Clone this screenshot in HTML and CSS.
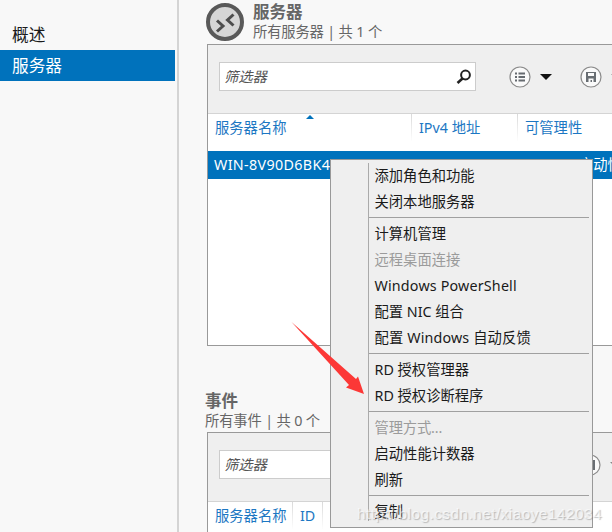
FILE: index.html
```html
<!DOCTYPE html>
<html lang="zh-CN">
<head>
<meta charset="utf-8">
<title>服务器</title>
<link rel="stylesheet" href="styles.css">
</head>
<body>
<div class="app">
  <nav class="sidebar">
    <a class="nav-item">概述</a>
    <a class="nav-item active">服务器</a>
  </nav>
  <main class="main">
    <section class="section">
      <header class="head">
        <svg class="logo" width="40" height="40" viewBox="0 0 40 40"><circle cx="20" cy="20" r="17" fill="#d6d6d6" stroke="#595959" stroke-width="4"/><path d="M12 18.500l6 5.500-6 5.500M28.500 12.500l-6 5.500 6 5.500" fill="none" stroke="#4d4d4d" stroke-width="3"/></svg>
        <div>
          <h2>服务器</h2>
          <p>所有服务器 | 共 1 个</p>
        </div>
      </header>
      <div class="panel panel-servers">
        <div class="toolbar">
          <div class="filter"><span>筛选器</span>
            <svg width="16" height="16" viewBox="0 0 16 16" fill="none" stroke="#222"><circle cx="9.500" cy="6" r="4.400" stroke-width="2"/><path d="M6.500 9.500L1.500 14" stroke-width="2.600"/></svg>
          </div>
          <svg class="list-btn" width="22" height="22" viewBox="0 0 22 22"><circle cx="11" cy="11" r="10" fill="#fafafa" stroke="#8b8b8b" stroke-width="1.200"/><path d="M6 7.500h2M6 11h2M6 14.500h2M9.500 7.500h6.500M9.500 11h6.500M9.500 14.500h6.500" stroke="#666b70" stroke-width="2"/></svg>
          <i class="caret"></i>
          <svg class="save-btn" width="22" height="22" viewBox="0 0 22 22"><circle cx="11" cy="11" r="10" fill="#fafafa" stroke="#8b8b8b" stroke-width="1.200"/><path d="M6 6h10v10H6z" fill="#696e73"/><path d="M8 7h6v3H8zM8.500 12.500h5v3.500h-1.500v-2h-1.500v2h-2z" fill="#fafafa"/></svg>
          <i class="caret next"></i>
        </div>
        <div class="columns">
          <span class="c-name">服务器名称<i class="sort"></i></span><span class="c-ip">IPv4 地址</span><span class="c-manage">可管理性</span>
        </div>
        <div class="row"><span class="host">WIN-8V90D6BK4</span><span class="status">启动性能</span></div>
      </div>
    </section>
    <section class="section events">
      <header class="head">
        <div>
          <h2>事件</h2>
          <p>所有事件 | 共 0 个</p>
        </div>
      </header>
      <div class="panel panel-events">
        <div class="toolbar">
          <div class="filter"><span>筛选器</span></div>
          <svg class="pause-btn" width="22" height="22" viewBox="0 0 22 22"><circle cx="11" cy="11" r="10" fill="#fafafa" stroke="#8b8b8b" stroke-width="1.200"/><path d="M12 6h4v10h-4z" fill="#696e73"/></svg>
          <i class="caret next"></i>
        </div>
        <div class="columns">
          <span class="c-name">服务器名称</span><span class="c-id">ID</span><span class="c-rest"></span>
        </div>
      </div>
    </section>
  </main>
  <div class="menu">
    <ul class="menu-list">
      <li>添加角色和功能</li>
      <li>关闭本地服务器</li>
      <li class="sep"></li>
      <li>计算机管理</li>
      <li class="disabled">远程桌面连接</li>
      <li class="latin">Windows PowerShell</li>
      <li>配置 NIC 组合</li>
      <li class="mixed">配置 Windows 自动反馈</li>
      <li class="sep"></li>
      <li>RD 授权管理器</li>
      <li>RD 授权诊断程序</li>
      <li class="sep"></li>
      <li class="disabled dots">管理方式...</li>
      <li>启动性能计数器</li>
      <li>刷新</li>
      <li class="sep"></li>
      <li>复制</li>
    </ul>
  </div>
  <svg class="arrow" width="74" height="74" viewBox="0 0 74 74"><path d="M1.500 1L66 58L68 55.500L74 73L56 66.500L59 64Z" fill="#fc3836"/></svg>
  <div class="watermark">http://blog.csdn.net/xiaoye142034</div>
</div>
</body>
</html>
```
FILE: styles.css
```css
* { box-sizing: border-box; }
body { margin: 0; font: 14.3px/20px "Noto Sans", "Noto Sans CJK SC", sans-serif; color: #1a1a1a; }
h2, p, ul { margin: 0; padding: 0; }
.app { position: relative; display: flex; width: 612px; height: 532px; overflow: hidden; background: #f8f8f8; }
.sidebar { width: 179px; flex: none; padding-top: 19px; border-right: 2px solid #d4d4d4; }
.nav-item { display: block; width: 175px; height: 31px; padding-left: 12px; font-size: 16.7px; line-height: 31px; }
.nav-item.active { background: #0072bc; color: #fff; }
.main { flex: 1; min-width: 0; padding-left: 28px; }
.head { display: flex; height: 44px; margin-left: -2px; gap: 8px; color: #666; }
.logo { flex: none; margin-top: 2px; }
.head h2 { padding-top: 1px; font-size: 16.5px; line-height: 22px; }
.head p { margin-top: -1px; line-height: 19px; letter-spacing: -.15px; white-space: nowrap; }
.panel { width: 440px; border: 1px solid #999; background: #fff; }
.panel-servers { height: 302px; }
.panel-events { height: 130px; }
.toolbar { display: flex; align-items: flex-start; height: 69px; padding: 17px 0 0 11px; background: #efefef; border-bottom: 1px solid #d4d4d4; }
.filter { display: flex; flex: none; align-items: center; justify-content: space-between; width: 257px; height: 29px; padding: 0 3px 0 4px; background: #fff; border: 1px solid #ccc; color: #555; font-style: italic; }
.filter span { letter-spacing: -.1px; }
.list-btn { margin: 4px 0 0 33px; }
.caret { width: 0; margin: 12px 0 0 9px; border: 6px solid transparent; border-top-color: #111; border-bottom: 0; }
.save-btn { margin: 4px 0 0 28px; }
.pause-btn { margin: 4px 0 0 103px; }
.caret.next { border-top-color: #888; }
.columns { display: flex; height: 37px; color: #1c77c3; }
.columns span { padding: 4px 0 0 7px; }
.columns span + span { height: 27px; border-left: 1px solid; border-image: linear-gradient(#d8d8d8, #fff) 1; }
.columns .c-name { position: relative; width: 203px; }
.columns .c-ip { width: 106px; }
.sort { position: absolute; left: 98px; top: 1px; border: 4px solid transparent; border-bottom-color: #0072bc; border-top: 0; }
.row { display: flex; height: 28px; background: #0072bc; color: #fff; line-height: 28px; }
.host { width: 371px; padding-left: 6px; letter-spacing: .35px; }
.status { white-space: nowrap; }
.events { padding-top: 42px; }
.events .head h2 { padding-top: 2px; }
.panel-events .columns .c-name { width: 84px; }
.c-id { width: 30px; }
.menu { position: absolute; left: 330px; top: 159px; width: 263px; height: 369px; padding: 5px 3px 5px 37px; background: #efefef; border: 1px solid #999; }
.menu-list { height: 358px; border-left: 1px solid #aaa; list-style: none; margin-top: -1px; }
.menu-list li { height: 26px; padding-left: 5.5px; line-height: 26px; white-space: nowrap; }
.menu-list li:first-child { margin-top: -2px; }
.menu-list .sep { height: 6px; padding: 0; background: linear-gradient(#a0a0a0, #a0a0a0) 0 2px / 100% 1px no-repeat; }
.menu-list .disabled { color: #9b9b9b; }
.menu-list .latin { letter-spacing: .18px; }
.menu-list .mixed { letter-spacing: .14px; }
.menu-list .dots { letter-spacing: -.15px; }
.arrow { position: absolute; left: 290px; top: 321px; }
.watermark { position: absolute; left: 357px; top: 504px; font: 15.5px/20px "Liberation Sans", sans-serif; letter-spacing: .4px; color: rgba(255, 255, 255, .65); text-shadow: 1px 1px 1px rgba(120, 120, 120, .45); white-space: nowrap; }
```
